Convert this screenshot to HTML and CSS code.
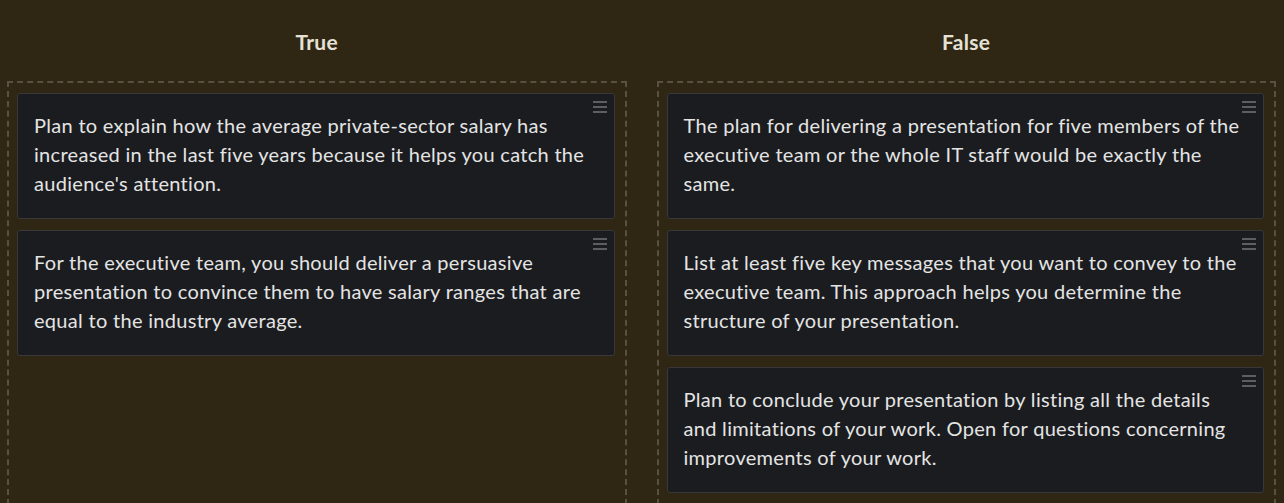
FILE: index.html
```html
<!DOCTYPE html>
<html>
<head>
    <meta charset="UTF-8">
    <title>True or False</title>
    <link rel="stylesheet" href="styles.css">
</head>
<body>
    <div class="board">
        <div class="column">
            <h2 class="column-title">True</h2>
            <div class="dropzone">
                <div class="card">
                    <span class="handle"></span>
                    Plan to explain how the average private-sector salary has increased in the last five years because it helps you catch the audience's attention.
                </div>
                <div class="card">
                    <span class="handle"></span>
                    For the executive team, you should deliver a persuasive presentation to convince them to have salary ranges that are equal to the industry average.
                </div>
            </div>
        </div>
        <div class="column">
            <h2 class="column-title">False</h2>
            <div class="dropzone">
                <div class="card">
                    <span class="handle"></span>
                    The plan for delivering a presentation for five members of the executive team or the whole IT staff would be exactly the same.
                </div>
                <div class="card">
                    <span class="handle"></span>
                    List at least five key messages that you want to convey to the executive team. This approach helps you determine the structure of your presentation.
                </div>
                <div class="card">
                    <span class="handle"></span>
                    Plan to conclude your presentation by listing all the details and limitations of your work. Open for questions concerning improvements of your work.
                </div>
            </div>
        </div>
    </div>
</body>
</html>
```

FILE: styles.css
```css
body {
    margin: 0;
    background-color: #2f2713;
    font-family: 'Lato', 'Noto Sans', sans-serif;
    color: #e4e4e4;
}
.board {
    display: grid;
    grid-template-columns: 1fr 1fr;
    gap: 30px;
    padding: 0 8px 0 7px;
}
.column {
    display: flex;
    flex-direction: column;
}
.column-title {
    margin: 0 0 27px 0;
    padding-top: 30px;
    font-size: 21px;
    line-height: 24px;
    font-weight: 700;
    letter-spacing: 0.3px;
    text-align: center;
    color: #e6e1d6;
}
.dropzone {
    flex: 1;
    display: flex;
    flex-direction: column;
    gap: 11px;
    padding: 10px 10px 10px 8px;
    border: 2px dashed #5a5040;
}
.card {
    position: relative;
    padding: 17px 16px 20px 16px;
    background: #1b1c1f;
    border: 1px solid #38383a;
    border-radius: 3px;
    font-size: 20px;
    line-height: 29px;
    letter-spacing: 0.3px;
}
.handle {
    position: absolute;
    top: 7px;
    right: 7px;
    width: 14px;
    height: 2px;
    background: #5e5e60;
    box-shadow: 0 5px 0 #5e5e60, 0 10px 0 #5e5e60;
}
```
